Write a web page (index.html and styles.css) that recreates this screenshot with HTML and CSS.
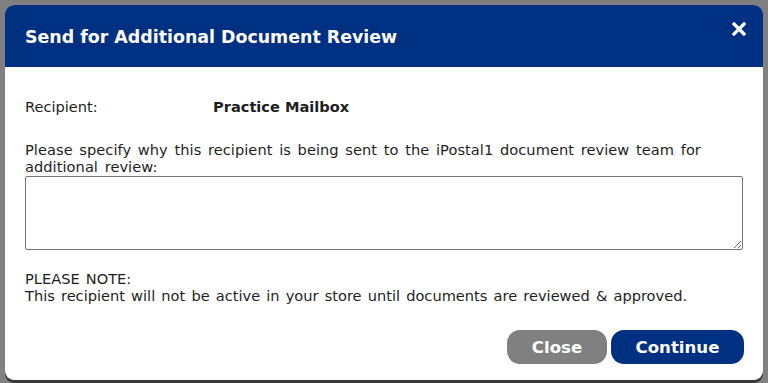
FILE: index.html
```html
<!DOCTYPE html>
<html>
<head>
<meta charset="utf-8">
<link rel="stylesheet" href="styles.css">
</head>
<body>
<div class="dialog">
  <div class="header">
    <h1 class="title">Send for Additional Document Review</h1>
    <button class="close-x" aria-label="Close">
      <svg width="14" height="14" viewBox="0 0 14 14"><path d="M2 2 L12 12 M12 2 L2 12" stroke="#fff" stroke-width="3.2" stroke-linecap="square"/></svg>
    </button>
  </div>
  <div class="body">
    <div class="row">
      <span class="label">Recipient:</span>
      <span class="value">Practice Mailbox</span>
    </div>
    <p class="prompt">Please specify why this recipient is being sent to the iPostal1 document review team for additional review:</p>
    <textarea class="reason"></textarea>
    <p class="note">PLEASE NOTE:<br>This recipient will not be active in your store until documents are reviewed &amp; approved.</p>
    <div class="actions">
      <button class="btn btn-close">Close</button>
      <button class="btn btn-continue">Continue</button>
    </div>
  </div>
</div>
</body>
</html>
```
FILE: styles.css
```css
html, body {
  margin: 0;
  padding: 0;
  height: 100%;
}
body {
  background: #808080;
  font-family: "DejaVu Sans", Verdana, sans-serif;
  font-size: 14.6px;
  line-height: 17px;
  color: #1e1e1e;
  overflow: hidden;
}
.dialog {
  margin: 5px 5px 0 5px;
  width: 758px;
  height: 375px;
  background: #fff;
  border-radius: 9px;
  overflow: hidden;
  box-shadow: 0 3px 0 #3a3a3a;
}
.header {
  background: #003082;
  height: 62px;
  display: flex;
  align-items: center;
  justify-content: space-between;
  padding: 0 20px;
}
.title {
  margin: 2px 0 0 0;
  color: #fff;
  font-size: 17.4px;
  font-weight: bold;
  line-height: 20px;
}
.close-x {
  background: none;
  border: 0;
  padding: 0;
  width: 14px;
  height: 14px;
  margin-right: -3px;
  margin-top: -14px;
  display: block;
}
.close-x svg { display: block; }
.body {
  padding: 31px 20px 0 20px;
}
.row {
  display: flex;
}
.label {
  width: 188px;
}
.value {
  font-weight: bold;
}
.prompt {
  margin: 26px 0 0 0;
  word-spacing: 2px;
  letter-spacing: 0.05px;
}
.reason {
  display: block;
  width: 718px;
  height: 74px;
  box-sizing: border-box;
  border: 1px solid #767676;
  border-radius: 2px;
  margin: 1px 0 0 0;
  resize: vertical;
  font-family: inherit;
}
.note {
  margin: 20px 0 0 0;
  word-spacing: 1.5px;
}
.actions {
  display: flex;
  justify-content: flex-end;
  gap: 4px;
  margin-top: 26px;
  margin-right: -1px;
}
.btn {
  height: 34px;
  border: 0;
  border-radius: 13px;
  color: #fff;
  font-family: "DejaVu Sans", Verdana, sans-serif;
  font-weight: bold;
  font-size: 16.6px;
}
.btn-close {
  width: 100px;
  background: #808080;
}
.btn-continue {
  width: 133px;
  background: #003082;
}
```
